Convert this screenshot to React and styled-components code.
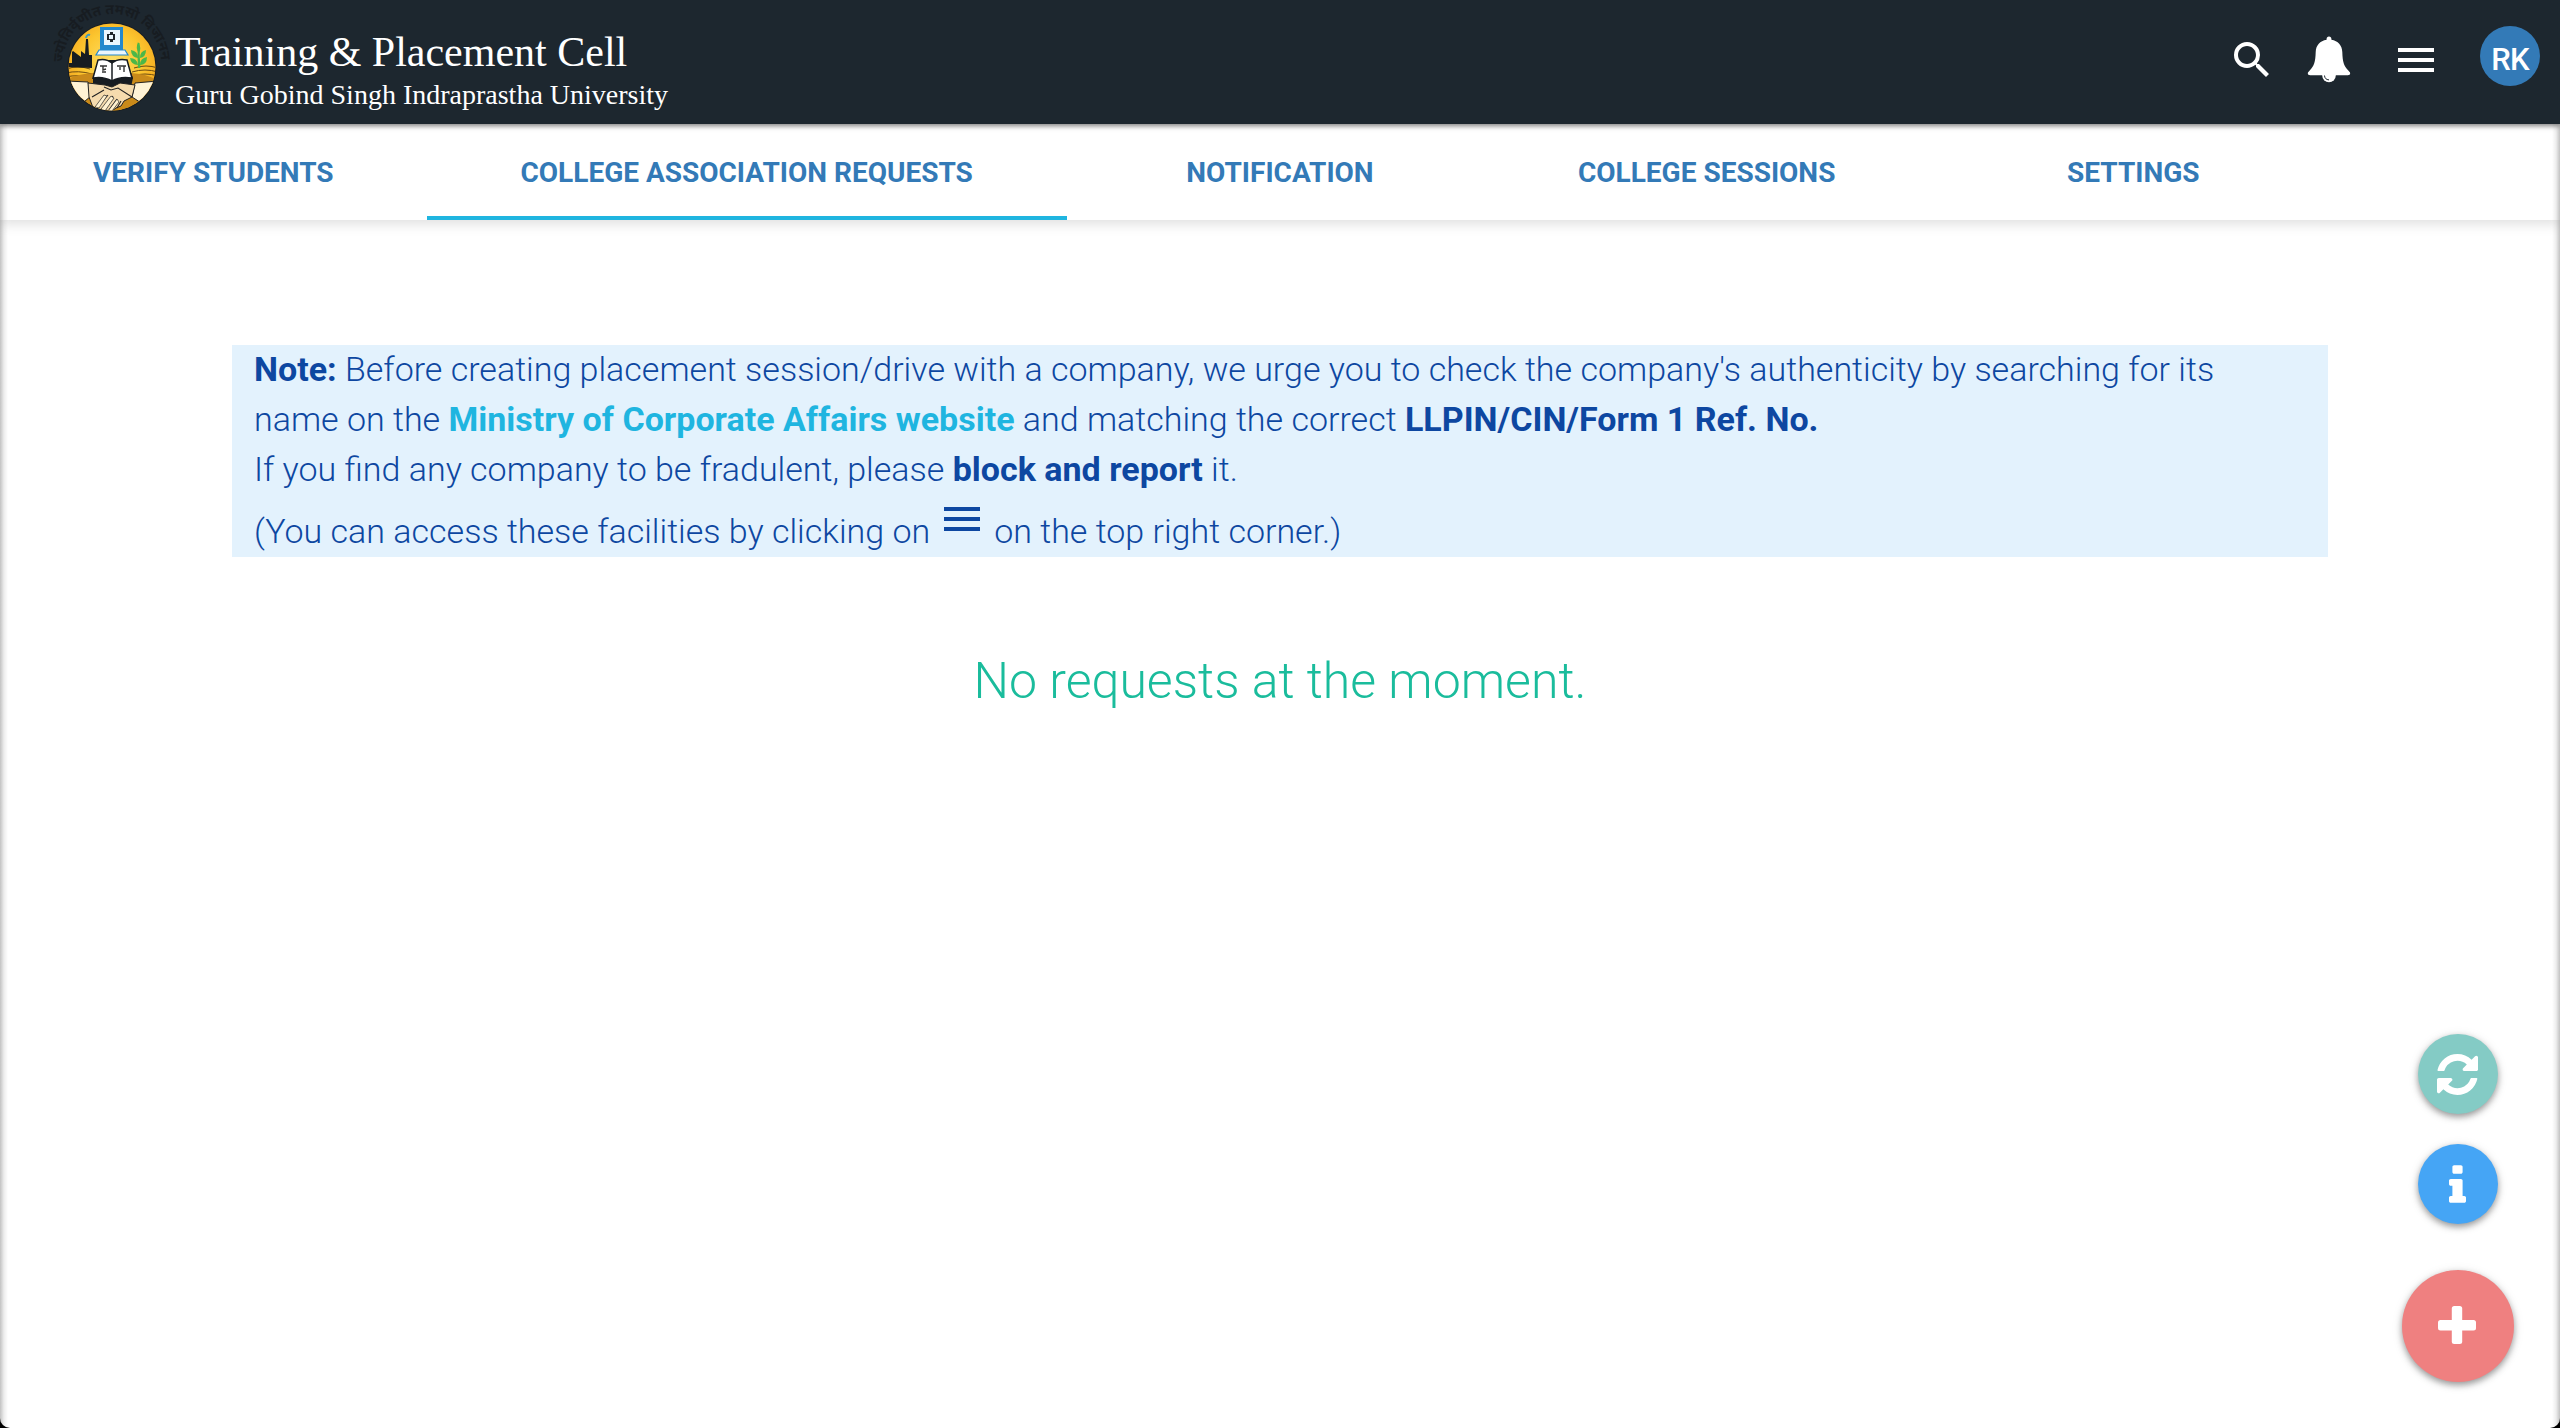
import React from "react";
import styled, { createGlobalStyle } from "styled-components";
import { MdSearch } from "react-icons/md";

const GlobalStyle = createGlobalStyle`
  * { box-sizing: border-box; }
  body { margin: 0; background: #000; font-family: Roboto, "Liberation Sans", sans-serif; }
`;

const Page = styled.div`
  position: relative;
  height: 1428px;
  background: #fff;
  border-radius: 0 0 10px 10px;
  overflow: hidden;
  display: flex;
  flex-direction: column;
  &::after {
    content: "";
    position: absolute;
    inset: 124px 0 0 0;
    z-index: 3;
    pointer-events: none;
    background:
      linear-gradient(to right, rgba(0, 0, 0, 0.24), rgba(0, 0, 0, 0.07) 4px, transparent 8px) left / 8px 100% no-repeat,
      linear-gradient(to left, rgba(0, 0, 0, 0.24), rgba(0, 0, 0, 0.07) 4px, transparent 8px) right / 8px 100% no-repeat;
  }
`;

const Header = styled.header`
  position: relative;
  z-index: 2;
  flex: none;
  height: 124px;
  padding: 0 20px 0 48px;
  background: #1d272f;
  box-shadow: 0 2px 5px rgba(0, 0, 0, 0.5);
  display: flex;
  align-items: flex-start;
  justify-content: space-between;
`;

const Brand = styled.div`
  display: flex;
  align-items: flex-start;
`;

const BrandText = styled.div`
  padding-top: 27px;
  margin-left: -1px;
  font-family: "Liberation Serif", "Times New Roman", serif;
  color: #fff;
  white-space: nowrap;
`;

const BrandTitle = styled.div`
  font-size: 42px;
  line-height: 50px;
`;

const BrandSubtitle = styled.div`
  font-size: 28px;
  line-height: 35px;
`;

const Actions = styled.div`
  display: flex;
  align-items: flex-start;
  padding-top: 26px;
`;

const IconSlot = styled.div`
  display: flex;
  margin: ${(p) => p.$margin};
  color: #fff;
`;

const Bars = styled.span`
  display: inline-flex;
  flex-direction: column;
  gap: 6px;
  width: 36px;
  &::before, &::after, & > i { content: ""; display: block; height: 4px; background: currentColor; }
`;

const Avatar = styled.div`
  width: 60px;
  height: 60px;
  border-radius: 50%;
  background: #337ab7;
  color: #fff;
  font-size: 31px;
  font-weight: 500;
  letter-spacing: -0.8px;
  line-height: 67px;
  text-align: center;
`;

const Tabs = styled.nav`
  position: relative;
  z-index: 1;
  flex: none;
  display: grid;
  grid-template-columns: 2fr 3fr 2fr 2fr 2fr 1fr;
  height: 96px;
  background: #fff;
  box-shadow: 0 4px 12px rgba(0, 0, 0, 0.13);
`;

const Tab = styled.a`
  display: flex;
  justify-content: center;
  height: 96px;
  border-bottom: 4px solid ${(p) => (p.$active ? "#1fb5e0" : "transparent")};
  color: #337ab7;
  font-size: 28px;
  font-weight: 700;
  line-height: 97px;
  white-space: nowrap;
`;

const Content = styled.main`
  padding: 125px 232px 0;
`;

const Note = styled.section`
  height: 212px;
  padding: 0 22px;
  background: #e3f2fd;
  color: #0d47a1;
  font-size: 34px;
  font-weight: 300;
  white-space: nowrap;
  b { font-weight: 700; }
`;

const NoteLine = styled.div`
  height: ${(p) => p.$height || 50}px;
  line-height: ${(p) => p.$line || 50}px;
`;

const Link = styled.a`
  color: #1fb5e0;
  font-weight: 700;
`;

const InlineBars = styled(Bars)`
  height: 24px;
  margin: 13px 14px 0;
  vertical-align: top;
`;

const Empty = styled.h2`
  margin: 89px 0 0;
  color: #1abc9c;
  font-size: 50px;
  font-weight: 300;
  line-height: 70px;
  text-align: center;
`;

const FabStack = styled.div`
  position: absolute;
  right: 46px;
  bottom: 46px;
  display: flex;
  flex-direction: column;
  align-items: center;
`;

const Fab = styled.button`
  width: ${(p) => p.$size}px;
  height: ${(p) => p.$size}px;
  margin: 0 0 ${(p) => p.$gap || 0}px;
  padding: 0 ${(p) => p.$nudge || 0}px 0 0;
  border: 0;
  border-radius: 50%;
  background: ${(p) => p.$color};
  color: #fff;
  box-shadow: 0 3px 6px rgba(0, 0, 0, 0.35), 0 2px 12px rgba(0, 0, 0, 0.1);
  display: flex;
  align-items: center;
  justify-content: center;
`;

const LogoArt = styled.svg`
  overflow: visible;
`;

const Motto = styled.text`
  font-family: "Noto Sans", sans-serif;
  font-size: 14px;
  font-weight: 700;
  fill: #171c21;
`;

function Logo() {
  return (
    <LogoArt width="128" height="124" viewBox="48 0 128 124">
      <defs>
        <radialGradient id="sun" cx="50%" cy="45%" r="55%">
          <stop offset="0" stopColor="#fde06a" />
          <stop offset="0.6" stopColor="#fcc62f" />
          <stop offset="1" stopColor="#f3a51d" />
        </radialGradient>
        <clipPath id="disc"><circle cx="112" cy="67" r="43.5" /></clipPath>
        <path id="arc" d="M63 63A49 49 0 0 1 161 63" />
      </defs>
      <Motto>
        <textPath href="#arc" startOffset="1" textLength="150">ज्योतिर्वृणीत तमसो विजानन</textPath>
      </Motto>
      <circle cx="112" cy="67" r="44.5" fill="#171c21" />
      <g clipPath="url(#disc)">
        <rect x="66" y="20" width="92" height="92" fill="url(#sun)" />
        <g fill="none" stroke="#6b4a12" strokeWidth="1">
          <path d="M66 69q12-4 24 0M66 73q12-3 26 1M66 77q12-3 26 1M134 68q12-4 24 0M132 72q13-4 26 0M132 76q13-4 26 0M66 81q12-3 26 0M134 80q12-3 24 0" />
        </g>
        <path d="M66 67V63h6V52l1-1 8 6V51l4 3 1-15h2l1 16h3v13z" fill="#171c21" />
        <path d="M86 38q1-4 4-3" stroke="#3a9bc5" strokeWidth="2" fill="none" />
        <path d="M100 27h23v23h-23z" fill="#2488cc" />
        <path d="M104 30h16v15h-16z" fill="#eaf6fd" />
        <path d="M107 34h3v-2h3v2h2v6h-2v2h-3v-2h-3z" fill="#20262b" />
        <path d="M109 35h4v4h-4z" fill="#eaf6fd" />
        <path d="M99 50h26l3 5H96z" fill="#eaf6fd" stroke="#2488cc" strokeWidth="1.200" />
        <g fill="#4cb748">
          <path d="M138 68q-1-12 0-25h1.500q0 14 1 25z" />
          <path d="M139 53q-4-4-1-11q4 6 1 11zM138 58q-7-1-7-8q7 1 7 8zM140 58q0-7 6-8q0 7-6 8zM138 65q-7 0-8-7q7 0 8 7zM140 65q0-7 7-8q0 8-7 8z" />
        </g>
        <path d="M66 80q10-6 27-7l38 0q16 1 26 7v33H66z" fill="#c98a1a" />
        <path d="M93 78l6-18h27l7 18-2 9H93z" fill="#171c21" />
        <path d="M98 60q8-2 14 3q6-5 15-3l5 18q-12-2-20 3q-9-5-19-3z" fill="#fff" stroke="#171c21" strokeWidth="1.500" />
        <path d="M112 63v18" stroke="#171c21" strokeWidth="1.500" />
        <path d="M100 66h7M103 66v4l3-1M106 72h-4M117 66h9M124 66v6M120 67v3" stroke="#333" strokeWidth="1.400" fill="none" />
        <path d="M66 81l22 1 3 14-13 11zM158 81l-23 2-3 14 14 9z" fill="#fff3d6" stroke="#222" strokeWidth="1" />
        <path d="M88 83l17 2 7 2 8-4 15 2-3 12-8 4-3 5-5 2-4 3-8-1-7 1-5-6-3-8z" fill="#f5dbae" stroke="#222" strokeWidth="1" />
        <path d="M104 87l7 3 7-2 14 9M98 106l10-11M103 109l10-13M109 110l8-11M117 108l4-7M92 97l12-7" stroke="#222" strokeWidth="1.100" fill="none" />
        <path d="M95 107l9-12 3 1-8 12zM101 109l10-13 3 2-9 13zM108 111l9-12 2 3-7 9z" fill="#fff1cf" stroke="#222" strokeWidth="0.700" />
      </g>
    </LogoArt>
  );
}

function Bell() {
  return (
    <svg width="44" height="48" viewBox="0 0 44 48" fill="none">
      <path fill="#fff" d="M22 0.500c1.500 0 2.400 1 2.400 2.400v.8C31 5 35 9 35.300 16c.3 10 1.500 14 6 18.500 1.800 1.700 2.300 2.500 1.600 3.800-.4.700-1 .9-1.900.9H3c-.9 0-1.500-.2-1.900-.9-.7-1.300-.2-2.100 1.600-3.800 4.500-4.500 5.700-8.500 6-18.500C9 9 13 5 19.600 3.700v-.8c0-1.400.9-2.400 2.400-2.400z" />
      <circle cx="22" cy="39.500" r="6.800" fill="#fff" />
      <path d="M17.500 39.500q.2 4 4.500 4.400" stroke="#1d272f" strokeWidth="1" />
    </svg>
  );
}

function Refresh() {
  return (
    <svg width="41" height="41" viewBox="0 0 1536 1536" fill="currentColor">
      <path d="M1511 928q0 5-1 7-64 268-268 434.500T764 1536q-146 0-282.500-55T238 1324l-129 129q-19 19-45 19t-45-19-19-45V960q0-26 19-45t45-19h448q26 0 45 19t19 45-19 45l-137 137q71 66 161 102t187 36q134 0 250-65t186-179q11-17 53-117 8-23 30-23h192q13 0 22.500 9.500t9.500 22.500zm25-800v448q0 26-19 45t-45 19h-448q-26 0-45-19t-19-45 19-45l138-138Q969 256 768 256q-134 0-250 65T332 500q-11 17-53 117-8 23-30 23H50q-13 0-22.500-9.500T18 608v-7q65-268 270-434.500T768 0q146 0 284 55.500T1297 212l130-129q19-19 45-19t45 19 19 45z" />
    </svg>
  );
}

function Info() {
  return (
    <svg width="17" height="38" viewBox="0 128 640 1408" fill="currentColor">
      <path d="M640 1344v128q0 26-19 45t-45 19H64q-26 0-45-19t-19-45v-128q0-26 19-45t45-19h64V896H64q-26 0-45-19T0 832V704q0-26 19-45t45-19h384q26 0 45 19t19 45v576h64q26 0 45 19t19 45zM512 192v192q0 26-19 45t-45 19H192q-26 0-45-19t-19-45V192q0-26 19-45t45-19h256q26 0 45 19t19 45z" />
    </svg>
  );
}

function Plus() {
  return (
    <svg width="40" height="40" viewBox="0 0 40 40" fill="currentColor">
      <rect x="0" y="14" width="38" height="10.500" rx="2.500" />
      <rect x="13.800" y="0" width="10.400" height="38" rx="2.500" />
    </svg>
  );
}

const tabs = ["VERIFY STUDENTS", "COLLEGE ASSOCIATION REQUESTS", "NOTIFICATION", "COLLEGE SESSIONS", "SETTINGS"];

export default function App() {
  return (
    <>
      <GlobalStyle />
      <Page>
        <Header>
          <Brand>
            <Logo />
            <BrandText>
              <BrandTitle>Training &amp; Placement Cell</BrandTitle>
              <BrandSubtitle>Guru Gobind Singh Indraprastha University</BrandSubtitle>
            </BrandText>
          </Brand>
          <Actions>
            <IconSlot $margin="10px 31px 0 0"><MdSearch size={48} /></IconSlot>
            <IconSlot $margin="10px 47px 0 0"><Bell /></IconSlot>
            <IconSlot $margin="22px 46px 0 0"><Bars><i /></Bars></IconSlot>
            <Avatar>RK</Avatar>
          </Actions>
        </Header>
        <Tabs>
          {tabs.map((t) => (
            <Tab key={t} $active={t.includes("ASSOCIATION")}>{t}</Tab>
          ))}
        </Tabs>
        <Content>
          <Note>
            <NoteLine $height={49} $line={48}><b>Note:</b> Before creating placement session/drive with a company, we urge you to check the company's authenticity by searching for its</NoteLine>
            <NoteLine>name on the <Link>Ministry of Corporate Affairs website</Link> and matching the correct <b>LLPIN/CIN/Form 1 Ref. No.</b></NoteLine>
            <NoteLine>If you find any company to be fradulent, please <b>block and report</b> it.</NoteLine>
            <NoteLine $height={62} $line={74}>(You can access these facilities by clicking on<InlineBars><i /></InlineBars>on the top right corner.)</NoteLine>
          </Note>
          <Empty>No requests at the moment.</Empty>
        </Content>
        <FabStack>
          <Fab $size={80} $gap={30} $nudge={2} $color="#84cbc5"><Refresh /></Fab>
          <Fab $size={80} $gap={46} $nudge={1} $color="#45a5f5"><Info /></Fab>
          <Fab $size={112} $color="#ef8080"><Plus /></Fab>
        </FabStack>
      </Page>
    </>
  );
}
